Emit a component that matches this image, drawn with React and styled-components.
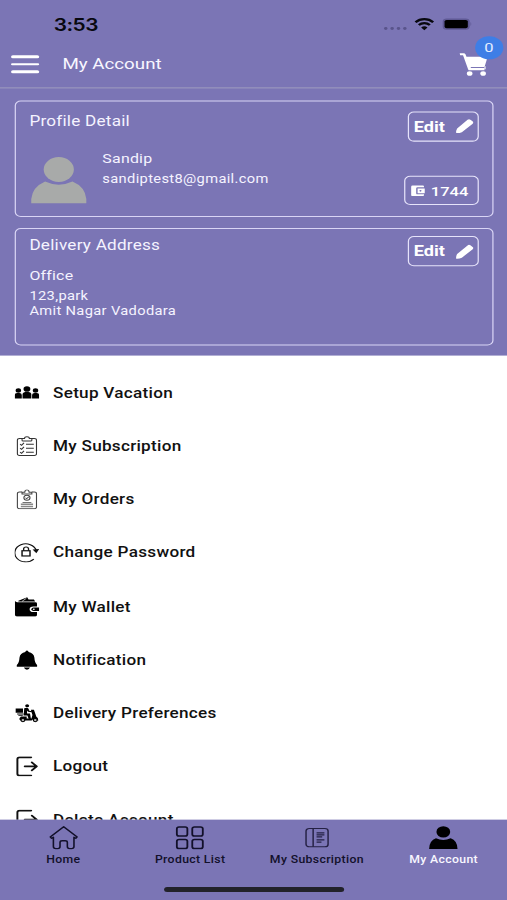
import React from 'react';
import styled, { createGlobalStyle } from 'styled-components';
import { MdAccountBalanceWallet } from 'react-icons/md';

const GlobalStyle = createGlobalStyle`
  * {
    box-sizing: border-box;
  }

  body {
    margin: 0;
    background: #fff;
    font-family: Roboto, "Liberation Sans", sans-serif;
  }

  svg {
    display: block;
    flex-shrink: 0;
  }
`;

const Viewport = styled.div`
  width: 507px;
  height: 900px;
  overflow: hidden;
  background: #7b75b5;
`;

// the phone is laid out on its native 414x896 grid and stretched to the window
const Screen = styled.div`
  display: flex;
  flex-direction: column;
  width: 414px;
  height: 896px;
  overflow: hidden;
  background: #fff;
  transform: scale(1.22464, 1.00446);
  transform-origin: 0 0;
`;

const Top = styled.div`
  flex: none;
  height: 354.3px;
  background: #7b75b5;
`;

const StatusBar = styled.div`
  display: flex;
  justify-content: space-between;
  height: 40px;
  padding: 14px 29px 0 43.8px;
  color: #08080f;
`;

const Clock = styled.div`
  padding-top: 0.6px;
  font: 600 17px/20px Inter, sans-serif;
  letter-spacing: -0.4px;
`;

const NavBar = styled.div`
  display: flex;
  align-items: center;
  height: 48px;
  padding: 0 15px 0 8.6px;
  border-bottom: 1px solid #a09cc0;
`;

const Burger = styled.div`
  display: flex;
  flex-direction: column;
  gap: 4.6px;
  width: 23.2px;
  margin-top: 1px;

  span {
    height: 2.9px;
    border-radius: 2px;
    background: #fff;
  }
`;

const NavTitle = styled.div`
  flex: 1;
  margin: 1.6px 0 0 19.2px;
  color: #f8f7ff;
  font-size: 15.3px;
`;

const Cart = styled.div`
  position: relative;
  color: #fff;
`;

const Badge = styled.div`
  position: absolute;
  top: -15.8px;
  left: 12.8px;
  width: 23px;
  height: 23px;
  border-radius: 50%;
  background: #3e7ee6;
  color: #e4edff;
  font-size: 13.5px;
  line-height: 23.6px;
  text-align: center;
`;

const Card = styled.div`
  display: flex;
  justify-content: space-between;
  height: 116.3px;
  margin: 11.5px 11.5px 0 12px;
  padding: ${p => p.$top}px 11px 10.5px 11px;
  border: 1px solid #d9d5f5;
  border-radius: 5px;
  color: #f5f3ff;
`;

const CardSide = styled.div`
  display: flex;
  flex-direction: column;
  justify-content: space-between;
  align-items: flex-end;
`;

const CardTitle = styled.div`
  font-size: 14px;
  line-height: 18px;
  letter-spacing: 0.18px;
`;

const Person = styled.div`
  display: flex;
  margin-top: 17.8px;
`;

const PersonText = styled.div`
  margin: 2px 0 0 12.3px;
`;

const Name = styled.div`
  font-size: 13px;
  line-height: 18px;
  letter-spacing: 0.17px;
`;

const Address = styled.div`
  margin-top: 12.6px;
`;

const Detail = styled.div`
  margin-top: ${p => p.$top || 0}px;
  font-size: 12px;
  line-height: 14.7px;
  letter-spacing: 0.27px;
`;

const Button = styled.div`
  display: flex;
  align-items: center;
  width: 58px;
  height: 29.5px;
  padding: 0 3px 0 4.3px;
  justify-content: space-between;
  border: 1px solid #e6e3fa;
  border-radius: 5px;
  color: #fff;
  font-size: 14.8px;
  font-weight: 700;
`;

const Balance = styled(Button)`
  width: 61px;
  padding: 0 7px 0 3.3px;
  font-size: 13.5px;
  font-weight: 500;
`;

const Menu = styled.div`
  flex: 1;
  min-height: 0;
  overflow: hidden;
  padding-top: 10.2px;
`;

const MenuRow = styled.div`
  display: flex;
  align-items: center;
  height: 53.15px;
  padding-left: 12px;
  color: #111;
  font-size: 14px;
  font-weight: 500;
  letter-spacing: 0.22px;

  svg {
    margin-right: 11.3px;
  }
`;

const TabBar = styled.div`
  flex: none;
  height: 80px;
  background: #7b75b5;
`;

const Tabs = styled.div`
  display: grid;
  grid-template-columns: repeat(4, 1fr);
  height: 67px;
`;

const Tab = styled.div`
  display: flex;
  flex-direction: column;
  align-items: center;
  padding-top: 5.5px;
  color: ${p => (p.$active ? '#f8f7ff' : '#12102a')};
  font-size: 10px;
  font-weight: 500;
  line-height: 12px;
  letter-spacing: 0.28px;
  white-space: nowrap;

  svg {
    margin-bottom: 4.6px;
  }
`;

const HomeIndicator = styled.div`
  width: 147px;
  height: 5px;
  margin: 0 auto;
  border-radius: 3px;
  background: #22222a;
`;

const StatusIcons = () =>
  <svg width="72" height="20" viewBox="0 0 72 20">
    <g fill="#59548b">
      <circle cx="2" cy="14.4" r="1.4" />
      <circle cx="7.2" cy="14.4" r="1.4" />
      <circle cx="12.4" cy="14.4" r="1.4" />
      <circle cx="17.6" cy="14.4" r="1.4" />
    </g>
    <g fill="none" stroke="#08080f" strokeWidth="2.1">
      <path d="M26.3 8.1a10 10 0 0 1 14.4 0" />
      <path d="M29 10.9a6.4 6.4 0 0 1 9 0" />
    </g>
    <path fill="#08080f" d="M33.5 16.1 30.9 13.4a3.8 3.8 0 0 1 5.2 0z" />
    <rect x="48.5" y="4.3" width="22" height="11.4" rx="3.2" fill="#5f5994" />
    <rect x="50" y="5.8" width="19" height="8.4" rx="1.7" fill="#000" />
    <path fill="#5f5994" d="M71.2 8q1.5 1.9 0 3.8z" />
  </svg>;

const CartIcon = () =>
  <svg width="24" height="24" viewBox="0 0 24 24" fill="currentColor">
    <path d="M.3.9h3.3q1.1 0 1.5 1.2l.8 2.3h16q1.3 0 1 1.3l-2 8.1q-.2.9-1.1.9H9.3l.3 1.1h11v2.2H8.5q-.9 0-1.2-.9L3.1 2.9H.8z" />
    <path d="M20.6 14h.9v3h-.9z" />
    <circle cx="8.5" cy="21.2" r="2.3" />
    <circle cx="19.5" cy="21.2" r="2.3" />
  </svg>;

const Pencil = () =>
  <svg width="15" height="15" viewBox="0 0 15 15" fill="currentColor">
    <path d="M.5 14.5Q.2 12 1.3 9.9L9.8 1.3q1.1-1 2.3-.1l1.8 1.6q1.1 1.1.1 2.3l-8.9 8.5q-2.1 1.1-4.6.9z" />
  </svg>;

const Avatar = () =>
  <svg width="46" height="47" viewBox="0 0 46 47" fill="#a8aaa9">
    <ellipse cx="23" cy="12.7" rx="12.3" ry="12.4" />
    <path d="M.5 46.3V42q1-11.8 11.3-17.3 11.2 6.3 22.4 0Q44.5 30 45.5 42v4.3z" />
  </svg>;

const AvatarBox = styled.div`
  margin: 9px 0 0 1.3px;
`;

const icons = {
  vacation:
    <g fill="#000">
      <circle cx="10" cy="6.3" r="2.8" />
      <path d="M6.4 15.8V11.7q0-2.5 2.5-2.5h2.2q2.5 0 2.5 2.5v4.1z" />
      <circle cx="3" cy="7.7" r="2.2" />
      <circle cx="17" cy="7.7" r="2.2" />
      <path d="M0 15.8V12.2q0-2 2-2h1.8q2 0 2 2v3.6zM14.2 15.8V12.2q0-2 2-2H18q2 0 2 2v3.6z" />
    </g>,
  subscription:
    <g fill="none" stroke="#333" strokeWidth=".9">
      <path d="M6 2.5H4Q2.2 2.5 2.2 4.3v13.5q0 1.7 1.8 1.7h12q1.8 0 1.8-1.7V4.3q0-1.8-1.8-1.8h-2" />
      <path d="M6 4.3V2.6h2q.1-1.8 2-1.8t2 1.8h2v1.7q0 .8-.9.8H6.9Q6 5.1 6 4.3z" />
      <path d="m4.4 8.2 1.2 1.1 2-2.4M4.4 12.2l1.2 1.1 2-2.4M4.4 16.2l1.2 1.1 2-2.4M9.2 8.3h6.4M9.2 12.3h6.4M9.2 16.3h6.4" />
    </g>,
  orders:
    <g fill="none" stroke="#444" strokeWidth=".9">
      <path d="M6 2.8H4q-1.8 0-1.8 1.8v13.2q0 1.7 1.8 1.7h12q1.8 0 1.8-1.7V4.6q0-1.8-1.8-1.8h-2" />
      <path d="M6 4.8V3h2.2q.1-2.3 1.8-2.3T11.8 3H14v1.8z" />
      <circle cx="10" cy="8.6" r="2.5" />
      <path d="m8.8 8.5 1 1 1.7-1.9M6.4 13.1h7.2" />
      <path stroke="#888" strokeWidth="1.4" d="M5 15h10M5 17.2h10" />
    </g>,
  password:
    <g fill="none" stroke="#111" strokeWidth="1.1">
      <path d="M15.6 16.6A9 9 0 1 1 17.7 8" />
      <path fill="#111" stroke="none" d="m14.6 7 5.4-.4-2.3 4.3z" />
      <rect x="6" y="8.3" width="6.5" height="5.2" strokeWidth="1.2" />
      <path d="M7.3 8.3V6.5q0-2 2-2t2 2v1.8" />
    </g>,
  wallet:
    <g fill="#000">
      <path d="M3 4.2 10.2.6l1.1 2.3h4.4l1 2H3zM.2 4.2q.4 1.3 1.8 1.3h15q1.2 0 1.2 1.2v3h-3q-3 0-3 2.8t3 2.8h3v3q0 1.4-1.3 1.4H1.8Q.2 19.7.2 18z" />
      <path d="M15.4 10.8H20v3.5h-4.6a1.7 1.7 0 0 1 0-3.5z" />
      <circle cx="15.6" cy="12.5" r=".8" fill="#fff" />
      <path stroke="#fff" strokeWidth=".6" d="m6 4.7 3.5-3" />
    </g>,
  bell:
    <g fill="#000">
      <path d="M10 .5q1.3 0 1.3 1.5 4.3.9 4.8 5.8.2 5.2 2.2 7.3v1.7H1.7v-1.7q2-2.1 2.2-7.3Q4.4 2.9 8.7 2q0-1.5 1.3-1.5zM7.5 17.6h5q-.6 2.1-2.5 2.1t-2.5-2.1z" />
    </g>,
  scooter:
    <g fill="#000">
      <path d="M.8 5.3h6v4.3h-6z" />
      <circle cx="10.2" cy="2.6" r="1.6" />
      <path d="M7.8 5.2q2.6-1.3 3.5.4l.6 2 2.2.5v1.1l-3.2-.5-.9-1.4.1 3h2.4l.8 5.8h-1.8l-1.1-3.9H7.3z" />
      <path d="M13.2 6.5h2.5l2 7.1q1.5.5 1.6 3.6h-2.2q-1.3-2.1-3.3 0H5q-1.5-.5-1.1-2.2l1.2-1.7h4.7v1.9h3.9l.8-3.4z" />
      <path d="M2 10.3h5.2v1H2zM3 12h3.6v.9H3z" />
      <circle cx="6.7" cy="16.9" r="1.6" fill="#bbb" stroke="#000" strokeWidth="1" />
      <circle cx="16.8" cy="16.9" r="1.6" fill="#bbb" stroke="#000" strokeWidth="1" />
    </g>,
  exit:
    <g fill="none" stroke="#111" strokeWidth="1.6" strokeLinecap="round" strokeLinejoin="round">
      <path d="M13.5 1H4Q2.2 1 2.2 2.8v14.4Q2.2 19 4 19h9.5M8.2 10h9.6M14 6l4 4-4 4" />
    </g>,
};

const tabIcons = {
  home:
    <g stroke="#12102a" strokeWidth="1.3" fill="none" strokeLinejoin="round">
      <path d="M12 1 1 11.2l1.1 1.3 1.5-1v9.3q0 2 1.9 2h1.7q1.8 0 1.8-2v-4q0-1.8 1.8-1.8h2.4q1.8 0 1.8 1.8v4q0 2 1.8 2h1.7q1.9 0 1.9-2v-9.3l1.5 1 1.1-1.3z" />
    </g>,
  products:
    <g stroke="#12102a" strokeWidth="1.5" fill="none">
      <rect x="1.4" y="1.3" width="8.6" height="9" rx="1.8" />
      <rect x="14" y="1.3" width="8.6" height="9" rx="1.8" />
      <rect x="1.4" y="13.7" width="8.6" height="9" rx="1.8" />
      <rect x="14" y="13.7" width="8.6" height="9" rx="1.8" />
    </g>,
  subscription:
    <g stroke="#252144" strokeWidth="1.2" fill="none">
      <rect x="2.9" y="2.8" width="18" height="18.2" rx="2.6" />
      <path d="M8.7 2.8V21" />
      <path d="M11.5 7.1h6.4M11.5 9.1h6.4M11.5 11.2h4.6M11.5 14.2h6.4M11.5 16.4h4" />
    </g>,
  account:
    <g fill="#000">
      <ellipse cx="12" cy="6.2" rx="5.6" ry="5.7" />
      <path d="M.4 23.2q.2-8.4 5.6-10.6 6 3.3 12 0 5.4 2.2 5.6 10.6z" />
    </g>,
};

const menu = [
  { label: 'Setup Vacation', icon: 'vacation' },
  { label: 'My Subscription', icon: 'subscription' },
  { label: 'My Orders', icon: 'orders' },
  { label: 'Change Password', icon: 'password' },
  { label: 'My Wallet', icon: 'wallet' },
  { label: 'Notification', icon: 'bell' },
  { label: 'Delivery Preferences', icon: 'scooter' },
  { label: 'Logout', icon: 'exit' },
  { label: 'Delete Account', icon: 'exit' },
];

const tabs = [
  { label: 'Home', icon: 'home' },
  { label: 'Product List', icon: 'products' },
  { label: 'My Subscription', icon: 'subscription' },
  { label: 'My Account', icon: 'account', active: true },
];

const EditButton = () =>
  <Button>Edit <Pencil /></Button>;

const App = () =>
  <Viewport>
    <GlobalStyle />
    <Screen>
      <Top>
        <StatusBar>
          <Clock>3:53</Clock>
          <StatusIcons />
        </StatusBar>
        <NavBar>
          <Burger><span /><span /><span /></Burger>
          <NavTitle>My Account</NavTitle>
          <Cart>
            <CartIcon />
            <Badge>0</Badge>
          </Cart>
        </NavBar>
        <Card $top={10.6}>
          <div>
            <CardTitle>Profile Detail</CardTitle>
            <Person>
              <AvatarBox><Avatar /></AvatarBox>
              <PersonText>
                <Name>Sandip</Name>
                <Detail $top={4.4}>sandiptest8@gmail.com</Detail>
              </PersonText>
            </Person>
          </div>
          <CardSide>
            <EditButton />
            <Balance><MdAccountBalanceWallet size={14} /> 1744</Balance>
          </CardSide>
        </Card>
        <Card $top={7}>
          <div>
            <CardTitle>Delivery Address</CardTitle>
            <Address>
              <Name>Office</Name>
              <Detail $top={4.4}>123,park</Detail>
              <Detail>Amit Nagar Vadodara</Detail>
            </Address>
          </div>
          <CardSide>
            <EditButton />
          </CardSide>
        </Card>
      </Top>
      <Menu>
        {menu.map(({ label, icon }) =>
          <MenuRow key={label}>
            <svg width="20" height="20" viewBox="0 0 20 20">{icons[icon]}</svg>
            {label}
          </MenuRow>
        )}
      </Menu>
      <TabBar>
        <Tabs>
          {tabs.map(({ label, icon, active }) =>
            <Tab key={label} $active={active}>
              <svg width="24" height="24" viewBox="0 0 24 24">{tabIcons[icon]}</svg>
              {label}
            </Tab>
          )}
        </Tabs>
        <HomeIndicator />
      </TabBar>
    </Screen>
  </Viewport>;

export default App;
